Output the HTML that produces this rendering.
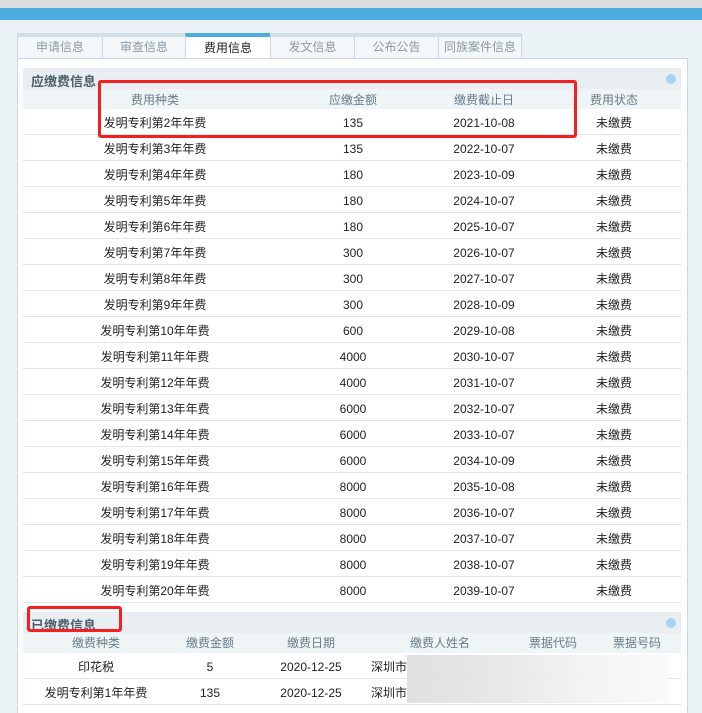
<!DOCTYPE html>
<html><head><meta charset="utf-8"><style>
*{margin:0;padding:0;box-sizing:border-box}
html,body{width:702px;height:713px;overflow:hidden}
body{background:#eaf2f6;font-family:"Liberation Sans","Noto Sans CJK SC",sans-serif;font-size:12px;color:#222;position:relative}
.a{position:absolute}
.tab{position:absolute;top:37px;height:21px;background:#f3f7f9;border-left:1px solid #cdd8de;color:#8b9aa3;font-size:12px;text-align:center;line-height:21px}
.row{position:absolute;left:23px;width:658px;height:26px;border-bottom:1px solid #dfe6ea;background:#fff}
.c{position:absolute;top:1px;line-height:26px;transform:translateX(-50%);white-space:nowrap}
.h{position:absolute;transform:translateX(-50%);white-space:nowrap;color:#6c7c86;line-height:20px}
.red{position:absolute;border:3px solid #f42020;border-radius:3px}
.ic{position:absolute;width:10px;height:10px;border-radius:50%;background:#a9d2ee}
</style></head><body>
<div class="a" style="left:0;top:0;width:702px;height:8px;background:#dcdcdc"></div>
<div class="a" style="left:0;top:8px;width:702px;height:12px;background:#4eacdf"></div>
<div class="a" style="left:17px;top:33px;width:505px;height:4px;background:#d3dde3"></div>
<div class="tab" style="left:17px;width:85px">申请信息</div>
<div class="tab" style="left:102px;width:83px">审查信息</div>
<div class="tab" style="left:185px;top:33px;height:26px;width:85px;background:#fff;color:#222;border-top:4px solid #4eacdf;line-height:22px">费用信息</div>
<div class="tab" style="left:270px;width:84px">发文信息</div>
<div class="tab" style="left:354px;width:84px">公布公告</div>
<div class="tab" style="left:438px;width:84px;border-right:1px solid #cdd8de">同族案件信息</div>
<div class="a" style="left:17px;top:58px;width:671px;height:660px;background:#fff;border:1px solid #c9d9e4"></div>
<div class="a" style="left:23px;top:68px;width:658px;height:21px;background:#e8eef1"></div>
<div class="a" style="left:31px;top:71px;font-weight:bold;color:#4d5f6b;font-size:13px">应缴费信息</div>
<div class="ic" style="left:666px;top:74px"></div>
<div class="a" style="left:23px;top:89px;width:658px;height:20px;background:#eff4f6"></div>
<div class="h" style="left:155px;top:90px">费用种类</div>
<div class="h" style="left:353px;top:90px">应缴金额</div>
<div class="h" style="left:484px;top:90px">缴费截止日</div>
<div class="h" style="left:614px;top:90px">费用状态</div>
<div id="t1"></div>
<div class="a" style="left:23px;top:612px;width:658px;height:21px;background:#e8eef1"></div>
<div class="a" style="left:31px;top:615px;font-weight:bold;color:#4d5f6b;font-size:13px">已缴费信息</div>
<div class="ic" style="left:666px;top:618px"></div>
<div class="a" style="left:23px;top:633px;width:658px;height:20px;background:#eff4f6"></div>
<div class="h" style="left:96px;top:633px">缴费种类</div>
<div class="h" style="left:210px;top:633px">缴费金额</div>
<div class="h" style="left:311px;top:633px">缴费日期</div>
<div class="h" style="left:440px;top:633px">缴费人姓名</div>
<div class="h" style="left:553px;top:633px">票据代码</div>
<div class="h" style="left:637px;top:633px">票据号码</div>
<div class="row" style="top:653px"><span class="c" style="left:73px">印花税</span><span class="c" style="left:187px">5</span><span class="c" style="left:288px">2020-12-25</span><span class="c" style="left:366px">深圳市</span></div>
<div class="row" style="top:679px"><span class="c" style="left:73px">发明专利第1年年费</span><span class="c" style="left:187px">135</span><span class="c" style="left:288px">2020-12-25</span><span class="c" style="left:366px">深圳市</span></div>
<div class="a" style="left:407px;top:655px;width:262px;height:48px;background:linear-gradient(90deg,#ddd,#e8e6e8 40%,#f4f2f4 70%,#fafafa);opacity:.9"></div>
<div class="row" style="top:705px"></div>
<div class="red" style="left:98px;top:80px;width:479px;height:58px"></div>
<div class="red" style="left:27px;top:606px;width:95px;height:26px"></div>
<script>
var d=[[2,135,"2021-10-08"],[3,135,"2022-10-07"],[4,180,"2023-10-09"],[5,180,"2024-10-07"],[6,180,"2025-10-07"],[7,300,"2026-10-07"],[8,300,"2027-10-07"],[9,300,"2028-10-09"],[10,600,"2029-10-08"],[11,4000,"2030-10-07"],[12,4000,"2031-10-07"],[13,6000,"2032-10-07"],[14,6000,"2033-10-07"],[15,6000,"2034-10-09"],[16,8000,"2035-10-08"],[17,8000,"2036-10-07"],[18,8000,"2037-10-07"],[19,8000,"2038-10-07"],[20,8000,"2039-10-07"]];
var h="";d.forEach(function(r,i){h+='<div class="row" style="top:'+(109+i*26)+'px"><span class="c" style="left:132px">发明专利第'+r[0]+'年年费</span><span class="c" style="left:330px">'+r[1]+'</span><span class="c" style="left:461px">'+r[2]+'</span><span class="c" style="left:591px">未缴费</span></div>';});
document.getElementById("t1").outerHTML=h;
</script>
</body></html>
